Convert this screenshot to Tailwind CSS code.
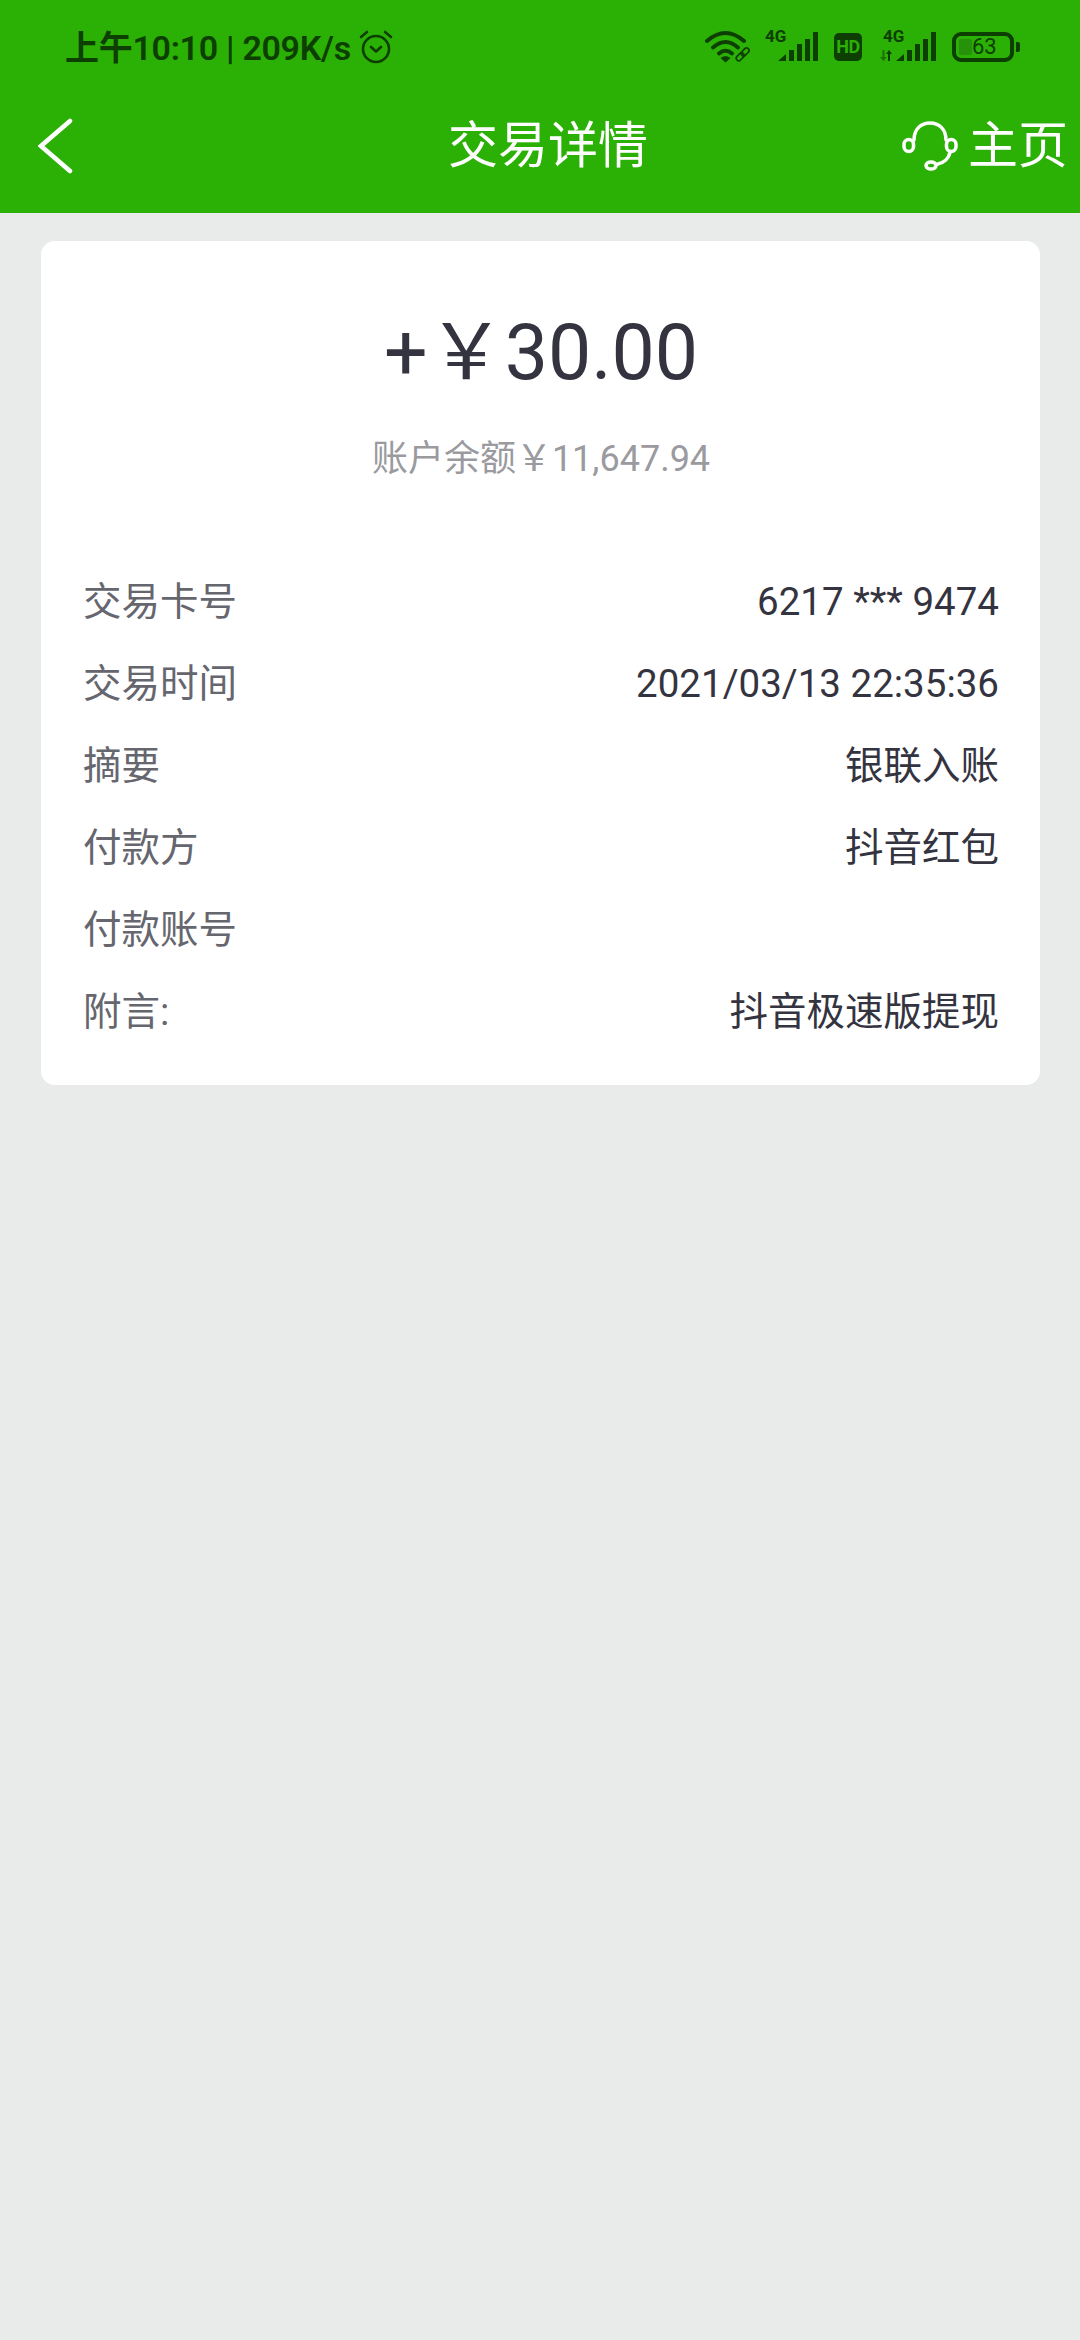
<!DOCTYPE html>
<html lang="zh">
<head>
<meta charset="utf-8">
<title>交易详情</title>
<script src="https://cdn.jsdelivr.net/npm/@tailwindcss/browser@4"></script>
</head>
<body class="m-0 w-[1080px] h-[2340px] overflow-hidden bg-[#e9ebea] font-['Roboto','Noto_Sans_CJK_SC',sans-serif]">
  <!-- 顶部状态栏 + 导航 -->
  <header class="bg-[#2bb005] h-[213px] flex flex-col">
    <div class="h-[94px] pl-[65px] pr-[60px] flex items-center justify-between text-[#0d3f02]">
      <div class="flex items-center gap-[7px]">
        <span class="pt-[2px] text-[34px] leading-none font-semibold tracking-[-0.3px]">上午10:10 | 209K/s</span>
        <svg class="w-[36px] h-[36px]" viewBox="0 0 36 36" fill="none" stroke="currentColor" stroke-width="2.6" stroke-linecap="round" stroke-linejoin="round">
          <circle cx="18" cy="20" r="13"/>
          <path d="M13 18l5 4.500 5-4.500M3 8l6-5M33 8l-6-5"/>
        </svg>
      </div>
      <div class="flex items-center">
        <!-- wifi -->
        <svg class="w-[48px] h-[34px]" viewBox="0 0 48 34" fill="none" stroke="currentColor" stroke-linecap="round">
          <path d="M3 11Q21.500 -5 40 11" stroke-width="4"/>
          <path d="M9 17.500Q21.500 6.500 34 17.500" stroke-width="4"/>
          <path d="M15 23.500Q21.500 18 28 23.500" stroke-width="4"/>
          <path d="M21.500 32.500l-5-4.500c3-2.500 7-2.500 10 0z" fill="currentColor" stroke="none"/>
          <g stroke-width="1.700" transform="rotate(-45 39 24)">
            <rect x="30.500" y="21.500" width="9" height="5" rx="2.500"/>
            <rect x="37.500" y="21.500" width="9" height="5" rx="2.500"/>
          </g>
        </svg>
        <!-- 4G signal 1 -->
        <svg class="ml-[12px] w-[56px] h-[42px]" viewBox="0 -4 56 42" fill="currentColor">
          <text x="1" y="12" font-family="Roboto" font-weight="700" font-size="17">4G</text>
          <path d="M14 31l8-7v7zM25 20h5v11h-5zM33 14h5v17h-5zM41 9h5v22h-5zM49 2h5v29h-5z"/>
        </svg>
        <!-- HD -->
        <div class="ml-[14px] w-[28px] h-[28px] rounded-[5px] bg-[#0d3f02] text-[#2bb005] text-[18px] leading-[28px] font-bold text-center tracking-[-0.5px]">HD</div>
        <!-- 4G signal 2 -->
        <svg class="ml-[16px] w-[60px] h-[42px]" viewBox="0 -4 60 42" fill="currentColor">
          <text x="5" y="12" font-family="Roboto" font-weight="700" font-size="17">4G</text>
          <path d="M4.500 20h2v7h2l-3 4-3.500-4h2.500z" opacity="0.55"/>
          <path d="M10 31v-7H8l3-4 3 4h-2v7z"/>
          <path d="M18 31l8-7v7zM29 20h5v11h-5zM37 14h5v17h-5zM45 9h5v22h-5zM53 2h5v29h-5z"/>
        </svg>
        <!-- 电量 -->
        <div class="ml-[14px] relative w-[62px] h-[30px] rounded-[9px] border-[4px] border-[#0d3f02] flex items-center">
          <div class="absolute left-[3px] top-[3px] bottom-[3px] w-[13px] rounded-[2px] bg-[#25920a]"></div>
          <span class="relative w-full pl-[16px] text-[22px] leading-none font-normal">63</span>
        </div>
        <div class="ml-[2px] w-[4px] h-[10px] rounded-r-[2px] bg-[#0d3f02]"></div>
      </div>
    </div>
    <nav class="relative flex-1 flex items-center justify-between pl-[38px] pr-[12px] pb-[15px] text-white">
      <svg class="w-[36px] h-[56px]" viewBox="0 0 36 56" fill="none" stroke="currentColor" stroke-width="4.500" stroke-linecap="round" stroke-linejoin="miter">
        <path d="M32 3L3 28l29 25"/>
      </svg>
      <h1 class="absolute left-[448px] text-[50px] leading-none font-normal">交易详情</h1>
      <div class="flex items-center gap-[9px]">
        <svg class="w-[58px] h-[54px]" viewBox="0 0 58 54" fill="none" stroke="currentColor" stroke-width="3.500" stroke-linecap="round">
          <path d="M13 21C13 10 20 4 29 4S45 10 45 21"/>
          <rect x="3" y="20.500" width="9.500" height="12" rx="4.700"/>
          <rect x="45.500" y="20.500" width="9.500" height="12" rx="4.700"/>
          <path d="M49 33C48 39 43 44 35.500 45.500"/>
          <ellipse cx="30" cy="46.500" rx="5" ry="3.500"/>
        </svg>
        <span class="text-[50px] leading-none">主页</span>
      </div>
    </nav>
  </header>

  <main class="mt-[28px] ml-[41px] w-[999px] h-[844px] bg-white rounded-[14px] pl-[42px] pr-[41px]">
    <!-- 金额 -->
    <section class="pt-[67px] text-center">
      <p class="text-[77px] leading-[90px] text-[#343440]">+￥30.00</p>
      <p class="mt-[39px] text-[36px] leading-[44px] text-[#9a9a9f]">账户余额￥11,647.94</p>
    </section>
    <!-- 明细 -->
    <dl class="mt-[80px] text-[38.5px] leading-[82px]">
      <div class="flex justify-between"><dt class="text-[#66666e]">交易卡号</dt><dd class="text-[#343440]">6217 *** 9474</dd></div>
      <div class="flex justify-between"><dt class="text-[#66666e]">交易时间</dt><dd class="text-[#343440]">2021/03/13 22:35:36</dd></div>
      <div class="flex justify-between"><dt class="text-[#66666e]">摘要</dt><dd class="text-[#343440]">银联入账</dd></div>
      <div class="flex justify-between"><dt class="text-[#66666e]">付款方</dt><dd class="text-[#343440]">抖音红包</dd></div>
      <div class="flex justify-between"><dt class="text-[#66666e]">付款账号</dt><dd class="text-[#343440]"></dd></div>
      <div class="flex justify-between"><dt class="text-[#66666e]">附言:</dt><dd class="text-[#343440]">抖音极速版提现</dd></div>
    </dl>
  </main>
</body>
</html>
